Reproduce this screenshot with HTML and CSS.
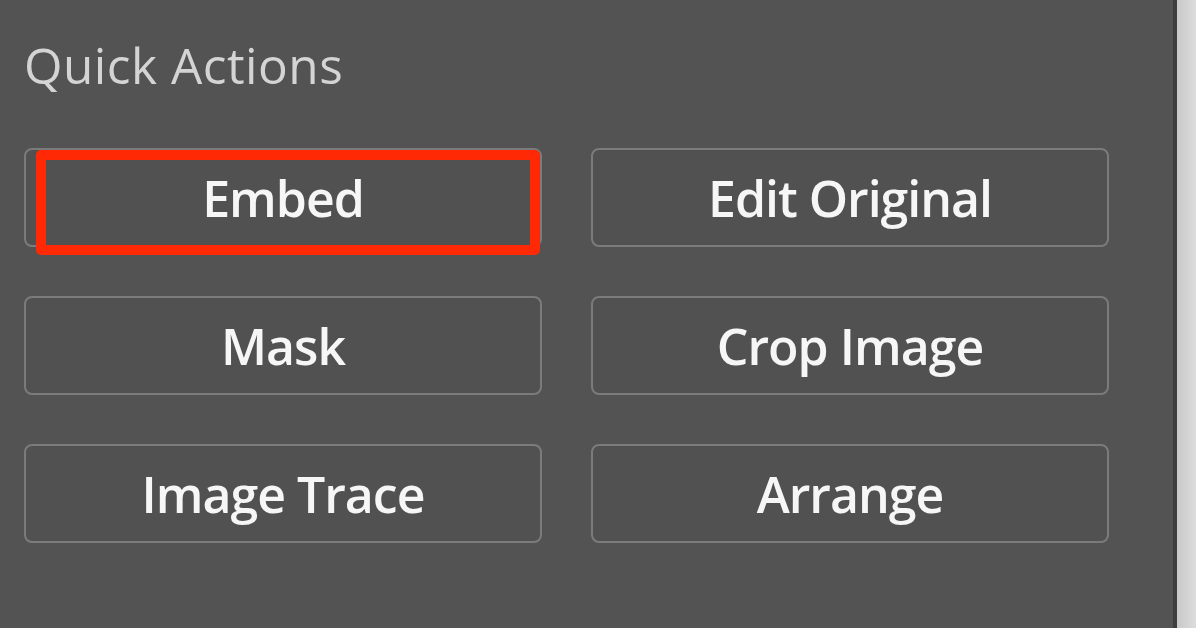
FILE: index.html
```html
<!DOCTYPE html>
<html>
<head>
<meta charset="utf-8">
<link rel="stylesheet" href="styles.css">
</head>
<body>
<div class="app">
  <div class="panel">
    <h2 class="title">Quick Actions</h2>
    <div class="grid">
      <div class="cell">
        <button class="btn">Embed</button>
        <div class="highlight"></div>
      </div>
      <div class="cell"><button class="btn">Edit Original</button></div>
      <div class="cell"><button class="btn">Mask</button></div>
      <div class="cell"><button class="btn">Crop Image</button></div>
      <div class="cell"><button class="btn">Image Trace</button></div>
      <div class="cell"><button class="btn">Arrange</button></div>
    </div>
  </div>
  <div class="divider"></div>
  <div class="side"></div>
</div>
</body>
</html>
```

FILE: styles.css
```css
html, body {
  margin: 0;
  padding: 0;
  width: 1196px;
  height: 628px;
  overflow: hidden;
  background: #535353;
  font-family: "Open Sans", "DejaVu Sans", sans-serif;
}
.app {
  display: flex;
  width: 1196px;
  height: 628px;
}
.panel {
  flex: 1;
  background: #535353;
  padding: 31px 0 0 24px;
  box-sizing: border-box;
}
.title {
  margin: 0;
  font-size: 49.5px;
  font-weight: 400;
  color: #d4d4d4;
  line-height: 68px;
  letter-spacing: 0.5px;
}
.grid {
  margin-top: 49px;
  display: grid;
  grid-template-columns: 518px 518px;
  column-gap: 49px;
  row-gap: 49px;
}
.cell {
  position: relative;
  height: 99px;
}
.btn {
  width: 100%;
  height: 100%;
  box-sizing: border-box;
  background: #515151;
  border: 2.5px solid #7b7b7b;
  border-radius: 8px;
  color: #f6f6f6;
  font-family: "Open Sans", "DejaVu Sans", sans-serif;
  font-size: 50px;
  font-weight: 600;
  letter-spacing: -1px;
  padding: 0;
  cursor: pointer;
}
.highlight {
  position: absolute;
  left: 12px;
  top: 2px;
  width: 504px;
  height: 105px;
  box-sizing: border-box;
  border: 10px solid #ff2a05;
  border-radius: 5px;
  pointer-events: none;
}
.divider {
  width: 4px;
  background: #3e3e3e;
}
.side {
  width: 19px;
  background: linear-gradient(to right, #c9c9c9, #dcdcdc);
}
```
